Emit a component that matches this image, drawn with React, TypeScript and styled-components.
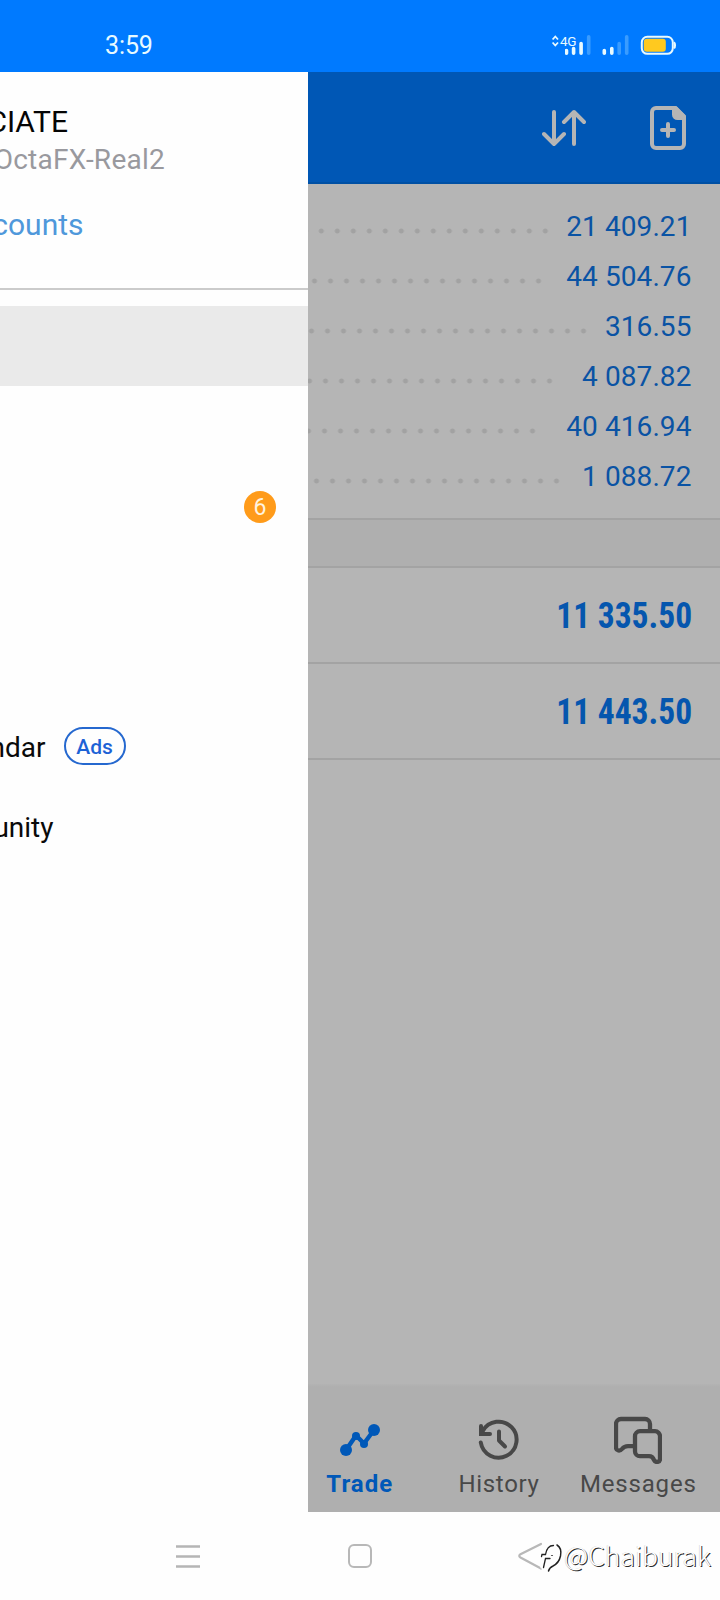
import React from 'react';
import styled, { createGlobalStyle } from 'styled-components';

const GlobalStyle = createGlobalStyle`
  * { box-sizing: border-box; }
  body { margin: 0; background: #fff; font-family: Roboto, "Liberation Sans", sans-serif; }
`;

const Screen = styled.div`
  width: 720px;
  height: 1600px;
  display: flex;
  flex-direction: column;
  overflow: hidden;
  background: #fefefe;
`;

const StatusBar = styled.header`
  height: 72px;
  flex: none;
  display: flex;
  justify-content: space-between;
  align-items: flex-start;
  padding: 31px 19px 0 105px;
  background: #007aff;
  color: #e8faff;
`;

const Clock = styled.span`
  font-size: 25px;
  line-height: 30px;
  letter-spacing: -0.1px;
`;

const StatusIcons = styled.div`
  display: flex;
  height: 30px;
  margin-top: 1px;
`;

const NetworkType = styled.span`
  width: 17px;
  margin-top: 1px;
  margin-right: -12px;
  font-size: 13.5px;
  line-height: 17px;
  letter-spacing: -0.4px;
`;

const Body = styled.div`
  height: 1440px;
  flex: none;
  display: flex;
`;

const Drawer = styled.aside`
  width: 308px;
  flex: none;
  overflow: hidden;
  background: #fefefe;
`;

const Account = styled.div`
  height: 218px;
  border-bottom: 2px solid #cbcbcb;
  padding-top: 32px;
  margin-bottom: 16px;
`;

const AccountLine = styled.div<{ $end: number; $size: number; $height: number; $color: string; $track?: number }>`
  display: flex;
  justify-content: flex-end;
  width: ${(p) => p.$end}px;
  height: ${(p) => p.$height}px;
  font-size: ${(p) => p.$size}px;
  line-height: 36px;
  letter-spacing: ${(p) => p.$track ?? 0}px;
  color: ${(p) => p.$color};
  white-space: nowrap;
`;

const MenuItem = styled.div<{ $active?: boolean }>`
  height: 80px;
  display: flex;
  align-items: center;
  background: ${(p) => (p.$active ? '#eaeaea' : 'transparent')};
`;

const MenuLabel = styled.span<{ $end: number }>`
  width: ${(p) => p.$end}px;
  display: flex;
  justify-content: flex-end;
  font-size: 28px;
  line-height: 36px;
  margin-top: 4px;
  color: #0a0a0a;
`;

const Badge = styled.span`
  width: 32px;
  height: 32px;
  margin: 2px 32px 0 auto;
  border-radius: 50%;
  background: #ff9b1a;
  color: #fff3df;
  font-size: 23px;
  line-height: 33px;
  text-align: center;
`;

const AdsTag = styled.span`
  width: 62px;
  height: 38px;
  margin-left: 18px;
  border: 2px solid #2568cf;
  border-radius: 19px;
  color: #1c62d6;
  font-size: 21px;
  font-weight: 500;
  line-height: 36px;
  text-align: center;
`;

const Main = styled.main`
  width: 412px;
  display: flex;
  flex-direction: column;
  overflow: hidden;
  background: #b5b5b5;
`;

const Toolbar = styled.div`
  height: 112px;
  flex: none;
  display: flex;
  justify-content: flex-end;
  gap: 64px;
  padding: 34px 34px 0 0;
  border-bottom: 2px solid #0050a4;
  background: #0057b5;
`;

const Summary = styled.section`
  height: 336px;
  flex: none;
  padding: 17px 28.5px 0 0;
  border-bottom: 2px solid #a3a3a3;
`;

const SummaryRow = styled.div`
  height: 50px;
  display: flex;
  justify-content: space-between;
`;

const Dots = styled.span<{ $width: number }>`
  width: ${(p) => p.$width}px;
  height: 16px;
  margin-top: 22px;
  background: radial-gradient(circle at 8px 8px, #a2a2a2 2.1px, transparent 2.9px) right top / 16px 16px repeat-x;
`;

const Amount = styled.span`
  font-size: 28px;
  line-height: 52px;
  letter-spacing: 0.08px;
  color: #0a53a4;
`;

const SectionGap = styled.div`
  height: 48px;
  flex: none;
  background: #afafaf;
  border-bottom: 2px solid #a3a3a3;
`;

const Position = styled.div`
  height: 96px;
  flex: none;
  display: flex;
  justify-content: flex-end;
  padding-right: 28px;
  border-bottom: 2px solid #a3a3a3;
`;

const Profit = styled.strong`
  font-family: "Roboto Condensed", Roboto, sans-serif;
  font-size: 36px;
  font-weight: 700;
  line-height: 96px;
  color: #0556ae;
  transform: scaleX(0.93);
  transform-origin: right center;
`;

const TabBar = styled.nav`
  height: 128px;
  flex: none;
  margin-top: auto;
  display: flex;
  padding-right: 12px;
  justify-content: flex-end;
  background: linear-gradient(#b3b3b3, #afafaf 3px);
`;

const Tab = styled.div<{ $active?: boolean }>`
  width: 139.3px;
  flex: none;
  display: flex;
  flex-direction: column;
  align-items: center;
  padding-top: 32px;
  color: ${(p) => (p.$active ? '#0058b8' : '#484848')};
  font-weight: ${(p) => (p.$active ? 700 : 400)};
`;

const TabLabel = styled.span<{ $track: number }>`
  font-size: 24px;
  line-height: 28px;
  margin-top: 6px;
  letter-spacing: ${(p) => p.$track}px;
`;

const SystemNav = styled.footer`
  position: relative;
  height: 88px;
  display: flex;
  align-items: flex-start;
  padding: 30px 0 0 174px;
  gap: 144px;
`;

const Watermark = styled.div`
  position: absolute;
  left: 536px;
  top: 24px;
  display: flex;
`;

const Handle = styled.span`
  margin-left: -2px;
  font-family: "Noto Sans CJK SC", "Noto Sans", sans-serif;
  font-weight: 300;
  font-size: 26.6px;
  line-height: 38px;
  color: #fff;
  text-shadow: 1px 1px 0 #2c2c2c, -0.5px -0.5px 0 #cfcfcf;
  white-space: nowrap;
`;

const summary = [
  { amount: '21 409.21', dots: 245.3 },
  { amount: '44 504.76', dots: 238.5 },
  { amount: '316.55', dots: 283.5 },
  { amount: '4 087.82', dots: 249.5 },
  { amount: '40 416.94', dots: 232.5 },
  { amount: '1 088.72', dots: 256.5 },
];

const SignalIcon = () => (
  <svg width="136" height="30" viewBox="0 0 136 30" fill="none">
    <g stroke="#e8faff" strokeWidth="3.6" strokeLinecap="round">
      <path d="M1.5 18.5V21.2M8.6 16.5V21.2M16.1 11.5V21.2M39.3 18.5V21.2M46.8 16.5V21.2" />
    </g>
    <g stroke="#3a9cff" strokeWidth="3.6" strokeLinecap="round">
      <path d="M23.7 4.8V21.2M54.2 11.5V21.2M61.7 4.8V21.2" />
    </g>
    <rect x="76.8" y="4.8" width="31" height="17" rx="5.5" stroke="#e8faff" strokeWidth="2" />
    <rect x="78.8" y="6.8" width="22" height="13" rx="3" fill="#ffc91f" />
    <path d="M109 10.3c1.4 1 1.4 5 0 6" stroke="#e8faff" strokeWidth="2" />
  </svg>
);

const DataIcon = () => (
  <svg width="9" height="30" viewBox="0 0 9 30" fill="none" stroke="#e8faff" strokeWidth="1.8">
    <path d="M1.6 7.500L4.3 4.500L7 7.500M1.6 10.500L4.3 13.500L7 10.500" />
  </svg>
);

const SortIcon = () => (
  <svg width="44" height="42" viewBox="0 0 44 42" fill="none" stroke="#b5b5b5" strokeWidth="4" strokeLinecap="round" strokeLinejoin="round">
    <path d="M12 6V38M2 28L12 38L22 28M32 38V6M22 16L32 6L42 16" />
  </svg>
);

const NewOrderIcon = () => (
  <svg width="36" height="44" viewBox="0 0 36 44" fill="none" stroke="#b5b5b5" strokeLinecap="round" strokeLinejoin="round">
    <path d="M6 2H25.5L34 10.5V38a4 4 0 0 1-4 4H6a4 4 0 0 1-4-4V6a4 4 0 0 1 4-4Z" strokeWidth="4" />
    <path d="M22 2V8.500a5.500 5.500 0 0 0 5.500 5.500H36V10L26 0Z" fill="#b5b5b5" stroke="none" />
    <path d="M18 18V30M12 24H24" strokeWidth="4" />
  </svg>
);

const TradeIcon = () => (
  <svg width="48" height="48" viewBox="0 0 48 48">
    <path d="M10 34L20 19.500L28 27.500L38 14" fill="none" stroke="currentColor" strokeWidth="4.400" />
    <g fill="currentColor">
      <circle cx="10" cy="34" r="6" />
      <circle cx="20" cy="20" r="4" />
      <circle cx="28" cy="28" r="4" />
      <circle cx="38" cy="14" r="6" />
    </g>
  </svg>
);

const HistoryIcon = () => (
  <svg width="48" height="48" viewBox="0 0 48 48" fill="none" stroke="currentColor" strokeWidth="4" strokeLinecap="round">
    <path d="M5.800 26.500A18 18 0 1 0 7.800 15" />
    <path d="M6 10V18H15" strokeLinejoin="miter" />
    <path d="M4 13L11 17.500L7 19.500H4Z" fill="currentColor" stroke="none" />
    <path d="M24 15.500V24.500L30 30.500" strokeLinejoin="round" />
  </svg>
);

const MessagesIcon = () => (
  <svg width="48" height="48" viewBox="0 0 48 48" fill="none" stroke="currentColor" strokeWidth="4.300" strokeLinecap="round" strokeLinejoin="round">
    <path d="M36 13V8a5 5 0 0 0-5-5H7a5 5 0 0 0-5 5V31.500C2 35 6 35.500 8 33C9.800 30.800 11.500 30.200 14 30.200H19" />
    <path d="M26 15.200H41a5 5 0 0 1 5 5V43C46 46.500 41.500 47 40 44C39 41.200 38 40.200 35 40.200H26a5 5 0 0 1-5-5V20.200a5 5 0 0 1 5-5Z" />
  </svg>
);

const RecentsKey = () => (
  <svg width="28" height="28" viewBox="0 0 28 28" stroke="#b5b5b5" strokeWidth="2.500">
    <path d="M2 4.400H26M2 14.400H26M2 24.400H26" />
  </svg>
);

const HomeKey = () => (
  <svg width="28" height="28" viewBox="0 0 28 28" fill="none" stroke="#b8b8b8" strokeWidth="2">
    <rect x="3" y="3" width="22" height="22" rx="5" />
  </svg>
);

const BackKey = () => (
  <svg width="28" height="28" viewBox="0 0 28 28" fill="none" stroke="#b8b8b8" strokeWidth="2.200" strokeLinecap="round">
    <path d="M23 2L2.500 12.200Q0 14 2.500 15.500L23 26.500" />
  </svg>
);

const WatermarkLogo = () => (
  <svg width="30" height="38" viewBox="0 0 30 38" fill="none" strokeLinecap="round">
    <path d="M6 31L9 18Q11 11 17 10.500M5 20H10" stroke="#fff" strokeWidth="3.500" />
    <path d="M7.500 31.500L9.500 22.500H14M5.500 20.500L6 18.500H9.500Q11 9.500 17.500 9.500" stroke="#222" strokeWidth="1.300" />
    <path d="M21 9Q26 12 24.500 20Q23 27 17 30Q13.500 31.500 12.500 35" stroke="#222" strokeWidth="1.500" />
    <path d="M15.500 19.500H16.500" stroke="#555" strokeWidth="1.200" />
  </svg>
);

export default function App() {
  return (
    <>
      <GlobalStyle />
      <Screen>
        <StatusBar>
          <Clock>3:59</Clock>
          <StatusIcons>
            <DataIcon />
            <NetworkType>4G</NetworkType>
            <SignalIcon />
          </StatusIcons>
        </StatusBar>
        <Body>
          <Drawer>
            <Account>
              <AccountLine $end={68} $size={30} $height={38} $color="#050505">CIATE</AccountLine>
              <AccountLine $end={165} $size={28} $height={65} $color="#99999e" $track={0.25}>OctaFX-Real2</AccountLine>
              <AccountLine $end={83.5} $size={30} $height={36} $color="#4f98db">counts</AccountLine>
            </Account>
            <MenuItem $active />
            <MenuItem />
            <MenuItem><Badge>6</Badge></MenuItem>
            <MenuItem />
            <MenuItem />
            <MenuItem>
              <MenuLabel $end={45.5}>ndar</MenuLabel>
              <AdsTag>Ads</AdsTag>
            </MenuItem>
            <MenuItem><MenuLabel $end={53.5}>unity</MenuLabel></MenuItem>
          </Drawer>
          <Main>
            <Toolbar>
              <SortIcon />
              <NewOrderIcon />
            </Toolbar>
            <Summary>
              {summary.map((row) => (
                <SummaryRow key={row.amount}>
                  <Dots $width={row.dots} />
                  <Amount>{row.amount}</Amount>
                </SummaryRow>
              ))}
            </Summary>
            <SectionGap />
            <Position><Profit>11 335.50</Profit></Position>
            <Position><Profit>11 443.50</Profit></Position>
            <TabBar>
              <Tab $active><TradeIcon /><TabLabel $track={1}>Trade</TabLabel></Tab>
              <Tab><HistoryIcon /><TabLabel $track={0.7}>History</TabLabel></Tab>
              <Tab><MessagesIcon /><TabLabel $track={0.8}>Messages</TabLabel></Tab>
            </TabBar>
          </Main>
        </Body>
        <SystemNav>
          <RecentsKey />
          <HomeKey />
          <BackKey />
          <Watermark>
            <WatermarkLogo />
            <Handle>@Chaiburak</Handle>
          </Watermark>
        </SystemNav>
      </Screen>
    </>
  );
}
